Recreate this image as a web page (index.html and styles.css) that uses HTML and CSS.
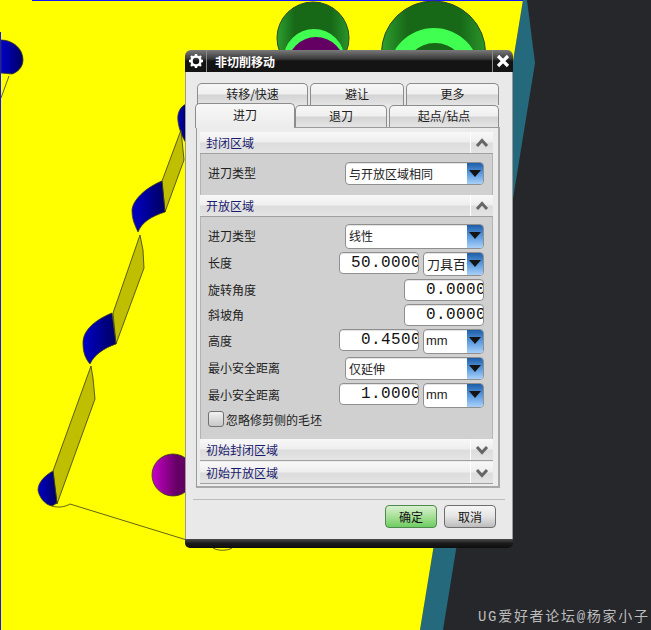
FILE: index.html
```html
<!DOCTYPE html>
<html>
<head>
    <title>非切削移动</title>
    <link rel="stylesheet" href="styles.css">
</head>
<body>
    <svg class="scene" width="651" height="630" viewBox="0 0 651 630">
        <defs>
            <linearGradient id="blue-fill" x1="0" x2="1" y1="0" y2="0">
                <stop offset="0" stop-color="#0000c8"/>
                <stop offset="1" stop-color="#000060"/>
            </linearGradient>
            <linearGradient id="purple-fill" x1="0" x2="1" y1="0" y2="0">
                <stop offset="0" stop-color="#c800c8"/>
                <stop offset="0.6" stop-color="#640064"/>
                <stop offset="1" stop-color="#640064"/>
            </linearGradient>
            <linearGradient id="green-fill" x1="0" x2="1" y1="0" y2="0">
                <stop offset="0" stop-color="#2ea02e"/>
                <stop offset="0.25" stop-color="#176817"/>
                <stop offset="0.75" stop-color="#176817"/>
                <stop offset="1" stop-color="#2a962a"/>
            </linearGradient>
        </defs>
        <rect width="651" height="630" fill="#26272b"/>
        <polygon points="523,0 527,0 535,63 443,630 420,630" fill="#246a7c"/>
        <polygon points="0,0 523,0 420,630 0,630" fill="#ffff00"/>
        <path d="M32 0.5H523M0.5 32V630" stroke="#1414ff" fill="none"/>

        <circle cx="313" cy="38" r="36" fill="url(#green-fill)" stroke="#2a4a2a"/>
        <circle cx="314" cy="59.500" r="30.500" fill="#40ff50"/>
        <circle cx="316" cy="65.600" r="28.600" fill="#640064"/>
        <circle cx="433.500" cy="53" r="52" fill="url(#green-fill)" stroke="#2a4a2a"/>
        <circle cx="434" cy="73.600" r="45.600" fill="#40ff50"/>
        <circle cx="435" cy="75" r="32" fill="#176817"/>

        <g stroke="#3a3a20" stroke-width="0.8">
            <path d="M1 40C12 40 23 48 23 60C23 68 16 73 12 74L1 73Z" fill="url(#blue-fill)"/>
            <path d="M9 76L1 98" fill="none"/>
            <path d="M186 104C180 107 177 113 178 121C179 130 183 138 186 143Z" fill="url(#blue-fill)"/>
            <polygon points="181,130 162,181 165,212 184,160" fill="#bfbf00"/>
            <path d="M162 181C145 188 133 200 132 210C132 220 135 225 138 232C142 222 152 216 165 212Z" fill="url(#blue-fill)"/>
            <polygon points="140,235 113,313 116,344 144,268 143,250" fill="#bfbf00"/>
            <path d="M112 313C95 320 83 330 83 343C83 352 85 358 90 364C94 355 104 348 116 344Z" fill="url(#blue-fill)"/>
            <polygon points="91,366 53,471 57,504 95,399 93,378" fill="#bfbf00"/>
            <path d="M53 471C44 476 38 483 38 490C39 497 45 505 52 506L57 503Z" fill="url(#blue-fill)"/>
            <path d="M52 506C58 508 65 507 70 504L190 541" fill="none"/>
            <path d="M213 548C218 551 227 551 232 548" fill="none"/>
            <circle cx="173" cy="475" r="21" fill="url(#purple-fill)"/>
        </g>
    </svg>

    <div class="dialog">
        <div class="titlebar">
            <div class="title-btn title-gear">
                <svg width="16" height="16" viewBox="0 0 16 16">
                    <circle cx="8" cy="8" r="4.500" fill="none" stroke="#fff" stroke-width="2.500"/>
                    <path d="M8 1V3.500M8 12.500V15M1 8H3.500M12.500 8H15M3 3L4.800 4.800M11.200 11.200L13 13M13 3L11.200 4.800M4.800 11.200L3 13" stroke="#fff" stroke-width="2.400"/>
                </svg>
            </div>
            <div class="title-text">非切削移动</div>
            <div class="title-btn title-close">
                <svg width="14" height="14" viewBox="0 0 14 14">
                    <path d="M2 2L12 12M12 2L2 12" stroke="#fff" stroke-width="3.200"/>
                </svg>
            </div>
        </div>

        <div class="dialog-body">
            <div class="tabs tabs-back">
                <div class="tab tab-transfer">转移/快速</div>
                <div class="tab tab-avoid">避让</div>
                <div class="tab tab-more">更多</div>
            </div>
            <div class="tabs tabs-front">
                <div class="tab tab-active">进刀</div>
                <div class="tab tab-retract">退刀</div>
                <div class="tab tab-start">起点/钻点</div>
            </div>

            <div class="panel">
                <div class="section-head">
                    <span>封闭区域</span>
                    <div class="chevron">
                        <svg width="14" height="10" viewBox="0 0 14 10"><path d="M2 8L7 2.500L12 8" fill="none" stroke="#666" stroke-width="3"/></svg>
                    </div>
                </div>
                <div class="section-body section-closed">
                    <div class="row h23">
                        <label>进刀类型</label>
                        <div class="select w139">
                            <span class="select-text">与开放区域相同</span>
                            <div class="arrow"></div>
                        </div>
                    </div>
                </div>

                <div class="section-head">
                    <span>开放区域</span>
                    <div class="chevron">
                        <svg width="14" height="10" viewBox="0 0 14 10"><path d="M2 8L7 2.500L12 8" fill="none" stroke="#666" stroke-width="3"/></svg>
                    </div>
                </div>
                <div class="section-body section-open">
                    <div class="row h25">
                        <label>进刀类型</label>
                        <div class="select w139">
                            <span class="select-text">线性</span>
                            <div class="arrow"></div>
                        </div>
                    </div>
                    <div class="row h24">
                        <label>长度</label>
                        <div class="number w80"><span>50.0000</span></div>
                        <div class="select w61">
                            <span class="select-text wide">刀具百分比</span>
                            <div class="arrow"></div>
                        </div>
                    </div>
                    <div class="row h22">
                        <label>旋转角度</label>
                        <div class="number w80"><span>0.0000</span></div>
                    </div>
                    <div class="row h22">
                        <label>斜坡角</label>
                        <div class="number w80"><span>0.0000</span></div>
                    </div>
                    <div class="row h25">
                        <label>高度</label>
                        <div class="number w80"><span>0.4500</span></div>
                        <div class="select w61">
                            <span class="select-text unit">mm</span>
                            <div class="arrow"></div>
                        </div>
                    </div>
                    <div class="row h23">
                        <label>最小安全距离</label>
                        <div class="select w139">
                            <span class="select-text">仅延伸</span>
                            <div class="arrow"></div>
                        </div>
                    </div>
                    <div class="row h25">
                        <label>最小安全距离</label>
                        <div class="number w80"><span>1.0000</span></div>
                        <div class="select w61">
                            <span class="select-text unit">mm</span>
                            <div class="arrow"></div>
                        </div>
                    </div>
                    <div class="check-row">
                        <div class="checkbox"></div>
                        <span>忽略修剪侧的毛坯</span>
                    </div>
                </div>

                <div class="section-head">
                    <span>初始封闭区域</span>
                    <div class="chevron">
                        <svg width="14" height="10" viewBox="0 0 14 10"><path d="M2 2L7 7.500L12 2" fill="none" stroke="#666" stroke-width="3"/></svg>
                    </div>
                </div>
                <div class="section-head">
                    <span>初始开放区域</span>
                    <div class="chevron">
                        <svg width="14" height="10" viewBox="0 0 14 10"><path d="M2 2L7 7.500L12 2" fill="none" stroke="#666" stroke-width="3"/></svg>
                    </div>
                </div>
            </div>

            <div class="separator"></div>
            <div class="buttons">
                <div class="btn btn-ok">确定</div>
                <div class="btn btn-cancel">取消</div>
            </div>
        </div>
        <div class="dialog-foot"></div>
    </div>

    <div class="watermark">UG爱好者论坛@杨家小子</div>
</body>
</html>
```

FILE: styles.css
```css
body {
    margin: 0;
    width: 651px;
    height: 630px;
    overflow: hidden;
    position: relative;
    background: #26272b;
    font-family: "Noto Sans CJK SC", "Liberation Sans", sans-serif;
    font-size: 12px;
    color: #222;
}
.scene {
    position: absolute;
    left: 0;
    top: 0;
    display: block;
}
.watermark {
    position: absolute;
    left: 478px;
    top: 607px;
    font-family: "Liberation Mono", "Noto Sans CJK SC", monospace;
    font-size: 14px;
    line-height: 20px;
    letter-spacing: 1.7px;
    color: #bcbcbc;
    white-space: nowrap;
}

/* dialog window */
.dialog {
    position: absolute;
    left: 185px;
    top: 50px;
    width: 328px;
    height: 498px;
    display: flex;
    flex-direction: column;
}
.titlebar {
    height: 22px;
    display: flex;
    align-items: center;
    background: linear-gradient(#7a7a7a, #3a3a3a 40%, #141414 50%, #141414);
    border-radius: 6px 6px 0 0;
    color: #fff;
}
.title-btn {
    height: 22px;
    display: flex;
    align-items: center;
    justify-content: center;
}
.title-gear {
    width: 21px;
    border-right: 1px solid #8a8a8a;
}
.title-close {
    width: 20px;
    border-left: 1px solid #8a8a8a;
}
.title-text {
    flex: 1;
    padding-left: 8px;
    font-size: 12px;
    font-weight: 700;
}
.dialog-body {
    flex: 1;
    position: relative;
    background: #e9e9e9;
    border-left: 1px solid #9a9a9a;
    border-right: 1px solid #9a9a9a;
    padding: 10px 12px 0 10px;
    display: flex;
    flex-direction: column;
}
.dialog-foot {
    height: 9px;
    background: linear-gradient(#4a4a4a, #1a1a1a 50%, #0e0e0e);
    border-radius: 0 0 5px 5px;
}

/* tabs */
.tabs {
    display: flex;
    align-items: flex-end;
}
.tabs-back {
    height: 23px;
    padding-left: 1px;
    gap: 2px;
}
.tabs-front {
    height: 22px;
}
.tab {
    height: 22px;
    line-height: 19px;
    text-align: center;
    border: 1px solid #8c8c8c;
    border-bottom: 0;
    border-radius: 5px 5px 0 0;
    background: linear-gradient(#f6f6f6, #f0f0f0 48%, #d4d4d4 52%, #e4e4e4);
    box-sizing: border-box;
    font-size: 12px;
}
.tab-transfer { width: 111px; }
.tab-avoid { width: 94px; }
.tab-more { width: 93px; }
.tab-retract { width: 92px; margin-right: 2px; }
.tab-start { width: 110px; }
.tab-active {
    width: 100px;
    height: 25px;
    line-height: 22px;
    margin-left: -1px;
    margin-bottom: -1px;
    position: relative;
    z-index: 1;
    background: linear-gradient(#f8f8f8, #ececec);
}

/* panel */
.panel {
    width: 304px;
    height: 361px;
    box-sizing: border-box;
    border: 1px solid #9a9a9a;
    border-right: 2px solid #a8a8a8;
    border-bottom: 2px solid #a8a8a8;
    background: #ececec;
    padding: 4px 5px 0 3px;
}
.section-head {
    height: 22px;
    box-sizing: border-box;
    display: flex;
    align-items: center;
    justify-content: space-between;
    background: linear-gradient(#f8f8f8, #eeeeee 48%, #dcdcdc 52%, #e4e4e4);
    border-bottom: 1px solid #a0a0a0;
    padding-left: 6px;
    color: #1a1a6e;
    font-size: 12px;
}
.section-head + .section-head {
    margin-top: 1px;
}
.chevron {
    width: 22px;
    height: 21px;
    border-left: 1px solid #fff;
    display: flex;
    align-items: center;
    justify-content: center;
}
.section-body {
    background: #d0d0d0;
    box-sizing: border-box;
    border-left: 1px solid #b4b4b4;
    border-right: 1px solid #b4b4b4;
    padding-left: 7px;
    padding-right: 8px;
}
.section-closed {
    height: 41px;
    padding-top: 8px;
}
.section-open {
    height: 222px;
    padding-top: 7px;
    display: flex;
    flex-direction: column;
    gap: 3px;
}

/* form rows */
.row {
    display: flex;
    align-items: flex-start;
    justify-content: flex-end;
    gap: 4px;
}
.row label {
    margin-right: auto;
    line-height: 21px;
    font-size: 12px;
}
.row.h23 label { line-height: 22px; }
.row.h25 label { line-height: 23px; }
.h22 { height: 22px; }
.h23 { height: 23px; }
.h24 { height: 24px; }
.h25 { height: 25px; }
.select, .number {
    box-sizing: border-box;
    background: #fff;
    border: 1px solid #8f8f8f;
    border-radius: 4px;
    box-shadow: inset 0 1px 0 #e4e4e4;
    overflow: hidden;
    height: 100%;
}
.w139 { width: 139px; }
.w80 { width: 80px; }
.w61 { width: 61px; }
.select {
    display: flex;
    align-items: stretch;
}
.select-text {
    flex: 1;
    min-width: 0;
    overflow: hidden;
    white-space: nowrap;
    padding-left: 3px;
    line-height: 21px;
    font-size: 12px;
}
.select-text.wide {
    font-size: 13px;
}
.select-text.unit {
    font-family: "Liberation Sans", sans-serif;
    font-size: 13px;
    padding-left: 2px;
}
.arrow {
    width: 16px;
    flex: none;
    position: relative;
    background: linear-gradient(#1e5ea8, #5a9ae0 50%, #a8d0f8);
}
.arrow::after {
    content: "";
    position: absolute;
    left: 2px;
    top: 7px;
    border-left: 6px solid transparent;
    border-right: 6px solid transparent;
    border-top: 7px solid #141414;
}
.number {
    display: flex;
    justify-content: flex-end;
    height: 22px;
    line-height: 20px;
    font-family: "Liberation Mono", monospace;
    font-size: 16px;
    letter-spacing: 0.4px;
    color: #111;
    white-space: nowrap;
}
.number span {
    margin-right: -3px;
    flex: none;
}
.check-row {
    display: flex;
    align-items: center;
    gap: 2px;
    height: 16px;
    font-size: 12px;
}
.checkbox {
    width: 16px;
    height: 16px;
    box-sizing: border-box;
    border: 1px solid #707070;
    border-radius: 3px;
    background: linear-gradient(#f2f2f2, #dcdcdc 50%, #c8c8c8);
}

/* bottom buttons */
.separator {
    height: 1px;
    margin: 11px -5px 0 -3px;
    background: #bcbcbc;
}
.buttons {
    display: flex;
    justify-content: flex-end;
    gap: 7px;
    margin-top: 5px;
    padding-right: 4px;
}
.btn {
    width: 52px;
    height: 23px;
    box-sizing: border-box;
    border: 1px solid #6e6e6e;
    border-radius: 4px;
    line-height: 21px;
    text-align: center;
    font-size: 12px;
    color: #111;
}
.btn-ok {
    border-color: #4e8a4e;
    background: linear-gradient(#d8f0d0, #a8e098 50%, #6ecc62);
}
.btn-cancel {
    background: linear-gradient(#f6f6f6, #e4e4e4 50%, #bcbcbc);
}
```
